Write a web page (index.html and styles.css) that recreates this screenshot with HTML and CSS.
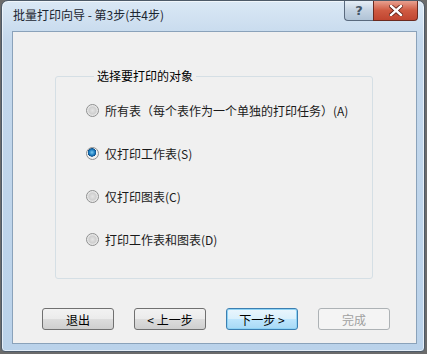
FILE: index.html
```html
<!DOCTYPE html>
<html lang="zh-CN">
<head>
    <meta charset="UTF-8">
    <title>批量打印向导</title>
    <link rel="stylesheet" href="styles.css">
</head>
<body>
    <div class="window">
        <div class="titlebar">
            <span class="title">批量打印向导 - 第3步(共4步)</span>
            <div class="caption-buttons">
                <div class="cap-btn help">?</div>
                <div class="cap-btn close">
                    <svg width="14" height="11" viewBox="0 0 14 11">
                        <path d="M2 1 L12 10 M12 1 L2 10" stroke="#5a1a10" stroke-width="4" stroke-linecap="square"/>
                        <path d="M2 1 L12 10 M12 1 L2 10" stroke="#fff" stroke-width="2.4" stroke-linecap="square"/>
                    </svg>
                </div>
            </div>
        </div>
        <div class="client">
            <fieldset class="group">
                <legend>选择要打印的对象</legend>
                <label class="option"><span class="radio"></span>所有表（每个表作为一个单独的打印任务）(A)</label>
                <label class="option"><span class="radio checked"></span>仅打印工作表(S)</label>
                <label class="option"><span class="radio"></span>仅打印图表(C)</label>
                <label class="option"><span class="radio"></span>打印工作表和图表(D)</label>
            </fieldset>
            <div class="buttons">
                <button class="btn">退出</button>
                <button class="btn">&lt; 上一步</button>
                <button class="btn default">下一步 &gt;</button>
                <button class="btn" disabled>完成</button>
            </div>
        </div>
    </div>
</body>
</html>
```

FILE: styles.css
```css
body {
    margin: 0;
    width: 427px;
    height: 354px;
    overflow: hidden;
    background: #6b6b6b;
    font-family: "Noto Sans CJK SC", "DejaVu Sans", sans-serif;
    font-size: 12px;
    color: #000;
}
.window {
    box-sizing: border-box;
    width: 424px;
    height: 352px;
    margin-left: 1px;
    padding: 0 7px 7px 10px;
    border: 1px solid #4d5a68;
    border-radius: 7px 7px 4px 4px;
    background: linear-gradient(to bottom, #dae8f5 0, #c4d8ec 40px, #bad2ea 100%);
    box-shadow: inset 0 0 0 1px rgba(255, 255, 255, 0.6);
}
.titlebar {
    height: 30px;
    display: flex;
    align-items: flex-start;
    justify-content: space-between;
}
.title {
    margin-top: 5px;
    margin-left: 1px;
    font-size: 12px;
    color: #1b2530;
}
.caption-buttons {
    display: flex;
    margin-right: -1px;
}
.cap-btn {
    height: 19px;
    border: 1px solid #5a6a7e;
    border-top: none;
    display: flex;
    align-items: center;
    justify-content: center;
}
.help {
    width: 28px;
    border-radius: 0 0 0 4px;
    border-right: none;
    background: linear-gradient(to bottom, #e6eef6, #c4d3e2 50%, #b0c3d6);
    color: #445566;
    font-family: "DejaVu Sans", sans-serif;
    font-weight: bold;
    font-size: 13px;
}
.close {
    width: 43px;
    border-radius: 0 0 4px 0;
    border-color: #6b2a20;
    background: linear-gradient(to bottom, #e8a190, #cf5a42 50%, #c04530);
}
.client {
    box-sizing: border-box;
    height: 313px;
    border: 1px solid #8aa2ba;
    background: #f0f0f0;
    padding: 37px 0 0 42px;
}
.group {
    box-sizing: border-box;
    width: 318px;
    height: 210px;
    margin: 0;
    padding: 19px 0 0 30px;
    border: 1px solid #d5dfe5;
    border-radius: 3px;
}
.group legend {
    padding: 0 3px;
    margin-left: 8px;
    line-height: 14px;
}
.option {
    display: flex;
    align-items: center;
    height: 16px;
    margin-bottom: 27px;
    white-space: nowrap;
    color: #1a1a1a;
}
.radio {
    box-sizing: border-box;
    width: 13px;
    height: 13px;
    margin-right: 6px;
    border-radius: 50%;
    border: 1px solid #8e8f8f;
    background: radial-gradient(circle, #e4e4e4 0, #cfcfcf 45%, #f4f4f4 75%);
}
.radio.checked {
    background: radial-gradient(circle at 45% 40%, #7ccaf0 0, #1f7fc2 30%, #0d4f8a 45%, #f4f4f4 50%, #e8e8e8 80%);
}
.buttons {
    display: flex;
    gap: 20px;
    margin-top: 29px;
    margin-left: -13px;
}
.btn {
    box-sizing: border-box;
    width: 72px;
    height: 22px;
    padding: 0;
    border: 1px solid #707070;
    border-radius: 3px;
    background: linear-gradient(to bottom, #f2f2f2 0, #ebebeb 50%, #dddddd 50%, #cfcfcf 100%);
    font-family: "Noto Sans CJK SC", sans-serif;
    font-size: 12px;
    color: #000;
}
.btn.default {
    border-color: #3c7fb1;
    box-shadow: inset 0 0 0 1px #8fd3f5;
    background: linear-gradient(to bottom, #eaf6fd 0, #d9f0fc 50%, #bee6fd 50%, #a7d9f5 100%);
}
.btn:disabled {
    border-color: #adb2b5;
    background: #f4f4f4;
    color: #a0a0a0;
}
```
